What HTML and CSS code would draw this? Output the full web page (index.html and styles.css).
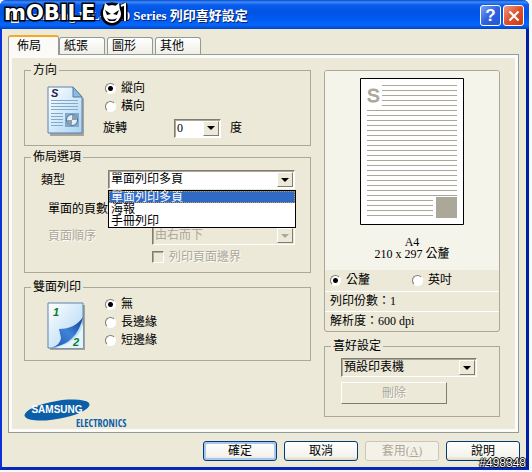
FILE: index.html
```html
<!DOCTYPE html>
<html lang="zh-Hant">
<head>
<meta charset="utf-8">
<title>列印喜好設定</title>
<link rel="stylesheet" href="styles.css">
</head>
<body>
<main class="window">
  <header class="titlebar">
    <svg class="app-icon" width="16" height="16" viewBox="0 0 16 16" aria-hidden="true"><path d="M2 7h12v6H2z" fill="#c9ccd2" stroke="#555"/><path d="M4 2h8v5H4z" fill="#fff"/><path d="M4 12h8v3H4z" fill="#eee"/></svg>
    <h1>Samsung ML-1510 Series 列印喜好設定</h1>
    <button class="caption-btn help" type="button" aria-label="Help">?</button>
    <button class="caption-btn close" type="button" aria-label="Close"><svg width="12" height="12" viewBox="0 0 12 12"><path d="M1.5 1.5l9 9M10.500 1.500l-9 9" stroke="#fff" stroke-width="2.200"/></svg></button>
    <svg class="brand" width="130" height="28" viewBox="0 0 130 28">
      <text class="brand-text" x="2" y="20">mOBILE</text>
      <g stroke="#000" stroke-width="5" stroke-linejoin="round" fill="none"><path d="M119 7l4-2v16"/><circle cx="110" cy="14" r="9"/><path d="M103 4l2 5M117 4l-2 5"/></g>
      <path d="M119 6l4-2v17" stroke="#fff" stroke-width="2" fill="none"/>
      <path d="M103 3l5 4h4l5-4 1 8-2 9-6 3-6-3-3-8z" fill="#fff"/>
      <circle cx="110" cy="14" r="9" fill="#fff"/>
      <path d="M103 10l6 4-4 1zM117 10l-6 4 4 1zM105 18q5 3 10 0l-2 3h-6z" fill="#000"/>
    </svg>
  </header>

  <div class="content">
    <nav class="tabs" role="tablist">
      <button class="tab active" type="button" role="tab" aria-selected="true">佈局</button>
      <button class="tab" type="button" role="tab">紙張</button>
      <button class="tab" type="button" role="tab">圖形</button>
      <button class="tab" type="button" role="tab">其他</button>
    </nav>

    <section class="panel">
      <div class="left">
        <fieldset class="group orientation">
          <legend>方向</legend>
          <svg class="page-icon" width="40" height="52" viewBox="0 0 40 52" aria-hidden="true">
            <defs><linearGradient id="sheet" x1="0" y1="0" x2="1" y2="1"><stop offset="0" stop-color="#fff"/><stop offset="1" stop-color="#a9d4f3"/></linearGradient></defs>
            <path d="M3 4h25l9 10v37H3z" fill="#777" opacity=".6"/>
            <path d="M1 2h25l9 10v36H1z" fill="url(#sheet)" stroke="#5d83ae"/>
            <path d="M26 2v10h9z" fill="#8dbbe2" stroke="#4f7dac"/>
            <path d="M4 15.500h27M4 18.500h27M4 21.500h27M4 24.500h27M4 28.500h12M4 31.500h12M4 34.500h12M4 37.500h12M4 40.500h12" stroke="#7fa9cf"/>
            <path d="M18 28h14v14H18z" fill="#7fa8d0"/><circle cx="25" cy="35" r="5.500" fill="#e5edf5" stroke="#56718f"/><path d="M25 30v5h5a5 5 0 0 0-5-5M25 40v-5h-5a5 5 0 0 0 5 5" fill="#8b9bb0"/>
            <text class="icon-s" x="4" y="12">S</text>
          </svg>
          <div class="options">
            <label class="radio"><input type="radio" name="orient" checked>縱向</label>
            <label class="radio"><input type="radio" name="orient">橫向</label>
            <div class="rotate">
              <label for="rotate">旋轉</label>
              <span class="combo small"><select id="rotate"><option>0</option></select><i class="arrow"></i></span>
              <span>度</span>
            </div>
          </div>
        </fieldset>

        <fieldset class="group layout">
          <legend>佈局選項</legend>
          <div class="row main">
            <label for="type">類型</label>
            <span class="combo"><select id="type"><option>單面列印多頁</option></select><i class="arrow"></i>
              <ul class="dropdown" role="listbox">
                <li class="selected" role="option" aria-selected="true">單面列印多頁</li>
                <li role="option">海報</li>
                <li role="option">手冊列印</li>
              </ul>
            </span>
          </div>
          <div class="row sub pages"><span>單面的頁數</span></div>
          <div class="row sub order disabled">
            <label for="order">頁面順序</label>
            <span class="combo"><select id="order" disabled><option>由右而下</option></select><i class="arrow"></i></span>
          </div>
          <div class="row sub border disabled">
            <span></span>
            <label class="check"><input type="checkbox" disabled>列印頁面邊界</label>
          </div>
        </fieldset>

        <fieldset class="group duplex">
          <legend>雙面列印</legend>
          <svg class="page-icon" width="40" height="50" viewBox="0 0 40 50" aria-hidden="true">
            <defs><linearGradient id="curl" x1="0" y1="1" x2="1" y2="0"><stop offset="0" stop-color="#1d55b5"/><stop offset=".5" stop-color="#3f83d8"/><stop offset="1" stop-color="#0c3f93"/></linearGradient></defs>
            <path d="M3 4h35v45H3z" fill="#777" opacity=".6"/>
            <path d="M1 2h35v45H1z" fill="url(#sheet)" stroke="#5d83ae"/>
            <path d="M36 16q-8 12-24 12l2 9q-1 7-9 9.500Q30 43 36 16z" fill="url(#curl)"/>
            <path d="M36 22q-4 19-28 25h28z" fill="#e4f4fd"/>
            <text class="icon-n" x="6" y="15">1</text><text class="icon-n" x="26" y="45">2</text>
          </svg>
          <div class="options">
            <label class="radio"><input type="radio" name="duplex" checked>無</label>
            <label class="radio"><input type="radio" name="duplex">長邊緣</label>
            <label class="radio"><input type="radio" name="duplex">短邊緣</label>
          </div>
        </fieldset>

        <svg class="logo" width="110" height="32" viewBox="0 0 110 32" role="img" aria-label="Samsung Electronics">
          <ellipse cx="32" cy="12" rx="33" ry="9" fill="#0b5ea8" transform="rotate(-10 32 12)"/>
          <text class="logo-name" x="32" y="15" text-anchor="middle">SAMSUNG</text>
          <text class="logo-sub" x="51" y="29">ELECTRONICS</text>
        </svg>
      </div>

      <div class="right">
        <div class="card">
          <div class="preview">
            <svg width="104" height="147" viewBox="0 0 104 147" aria-hidden="true">
              <path d="M.5.5h103v146H.5z" fill="#fff" stroke="#000"/>
              <path d="M22 7.500h75M22 12.500h75M22 17.500h75M22 22.500h75M22 27.500h75M7 32.500h90M7 37.500h90M7 42.500h90M7 47.500h90M7 52.500h90M7 57.500h90M7 62.500h90M7 67.500h90M7 72.500h90M7 77.500h90M7 82.500h90M7 87.500h90M7 92.500h90M7 97.500h90M7 102.500h90M7 107.500h90M7 112.500h90M7 117.500h90M7 122.500h66M7 127.500h66M7 132.500h66M7 137.500h66" stroke="#aca899"/>
              <path d="M76 119h21v21H76z" fill="#aca899"/>
              <text class="paper-s" x="7" y="24">S</text>
            </svg>
            <p>A4<br>210 x 297 公釐</p>
          </div>
          <div class="line units">
            <label class="radio"><input type="radio" name="unit" checked>公釐</label>
            <label class="radio"><input type="radio" name="unit">英吋</label>
          </div>
          <div class="line">列印份數：1</div>
          <div class="line">解析度：600 dpi</div>
        </div>
        <fieldset class="group favorites">
          <legend>喜好設定</legend>
          <span class="combo"><select aria-label="喜好設定"><option>預設印表機</option></select><i class="arrow"></i></span>
          <button class="delete" type="button" disabled>刪除</button>
        </fieldset>
      </div>
    </section>

    <footer class="actions">
      <button class="btn default" type="button">確定</button>
      <button class="btn" type="button">取消</button>
      <button class="btn" type="button" disabled>套用(<u>A</u>)</button>
      <button class="btn" type="button">說明</button>
    </footer>
  </div>
  <span class="stamp">#498348</span>
</main>
</body>
</html>
```
FILE: styles.css
```css
* { box-sizing: border-box; }
body {
  margin: 0;
  background: #f4faff;
  font: 12px/14px "Liberation Serif", "Noto Sans CJK TC", serif;
  color: #000;
}
button, select, input { font: inherit; color: inherit; margin: 0; }
.window {
  position: relative;
  margin-right: 3px;
  background: #ece9d8;
  border: solid #0831d9;
  border-width: 0 3px 3px 2px;
  border-right-color: #001ea0;
  border-bottom-color: #0828b8;
  border-radius: 6px 6px 0 0;
}
.titlebar {
  display: flex;
  align-items: center;
  gap: 2px;
  height: 29px;
  margin: 0 -3px 0 -2px;
  padding: 2px 5px 0 7px;
  border-radius: 6px 6px 0 0;
  background: linear-gradient(#0a49c8 0, #3c8cf8 2px, #0a5cec 5px, #0054e3 12px, #0058ee 18px, #0566fb 25px, #0144c4 29px);
}
.titlebar h1 {
  flex: 1;
  margin: 0;
  font-size: 13px;
  line-height: 16px;
  color: #fff;
  text-shadow: 1px 1px #0a246a;
  white-space: nowrap;
}
.caption-btn {
  display: grid;
  place-items: center;
  width: 21px;
  height: 21px;
  padding: 0;
  border: 1px solid #fff;
  border-radius: 3px;
  color: #fff;
  font: bold 17px/17px "Liberation Sans", sans-serif;
}
.help { background: linear-gradient(135deg, #7da2f4, #2f62dc 50%, #2457d6); }
.close { background: linear-gradient(135deg, #f09a82, #e0502c 50%, #c63b12); }
.brand { position: absolute; left: 0; top: 0; }
.brand-text {
  font: bold 21px "DejaVu Sans", sans-serif;
  fill: #fff;
  stroke: #000;
  stroke-width: 3px;
  paint-order: stroke;
}
.content { padding: 6px 7px 6px 6px; }
.tabs { display: flex; align-items: flex-end; gap: 2px; }
.tab {
  width: 46px;
  height: 17px;
  padding: 0;
  border: 1px solid #919b9c;
  border-bottom: 0;
  border-radius: 3px 3px 0 0;
  background: linear-gradient(#fff, #f0efe6);
  line-height: 16px;
}
.tab.active {
  width: 51px;
  height: 20px;
  margin: 0 -2px -1px 0;
  padding: 0 8px;
  border-top: 2px solid #f5a929;
  background: #fbfaf6;
  text-align: left;
  z-index: 1;
}
.tab:not(.active) { padding-left: 4px; text-align: left; }
.panel {
  display: grid;
  grid-template-columns: 287fr 176fr;
  gap: 13px;
  padding: 8px 18px 2px 15px;
  border: 1px solid #919b9c;
  outline: 3px solid #fcfbf8;
  outline-offset: -4px;
}
.left { min-width: 0; }
.group {
  margin: 0;
  min-width: 0;
  padding-left: 6px;
  border: 1px solid #aca899;
}
legend { height: 14px; padding: 0 2px; }
.orientation, .duplex { display: flex; gap: 18px; }
.orientation { padding: 2px 15px 7px 6px; }
.layout { margin-top: 4px; padding: 6px 15px 8px 6px; }
.duplex { margin-top: 7px; padding: 1px 15px 9px 6px; }
.page-icon { flex: none; margin: 6px -2px 0 16px; }
.orientation .options, .duplex .options { flex: 1; }
.radio { display: flex; align-items: center; gap: 5px; height: 18px; }
.options .radio { padding-left: 2px; }
input[type="radio"] {
  appearance: none;
  width: 11px;
  height: 11px;
  border: 1px solid;
  border-color: #807d70 #fff #fff #807d70;
  border-radius: 50%;
  background: #fff;
}
input[type="radio"]:checked { background: radial-gradient(circle, #000 2px, #fff 3px); }
input[type="checkbox"] {
  appearance: none;
  width: 12px;
  height: 12px;
  border: 1px solid;
  border-color: #807d70 #fff #fff #807d70;
  box-shadow: inset 1px 1px #aca899;
}
.rotate { display: flex; align-items: center; gap: 9px; margin-top: 3px; height: 20px; }
.rotate label { width: 62px; }
.combo {
  position: relative;
  display: flex;
  flex: 1;
  height: 19px;
  padding: 1px;
  border: 1px solid;
  border-color: #807d70 #fff #fff #807d70;
  box-shadow: inset 1px 1px #aca899;
  background: #fff;
}
.combo.small { flex: none; width: 47px; }
.combo select {
  appearance: none;
  flex: 1;
  min-width: 0;
  padding: 0 1px;
  border: 0;
  border-radius: 0;
  background: none;
  line-height: 15px;
}
.arrow {
  display: grid;
  place-items: center;
  width: 16px;
  border: 1px solid;
  border-color: #fff #807d70 #807d70 #fff;
  background: #ece9d8;
}
.arrow::after {
  content: "";
  border: 4px solid transparent;
  border-top-color: #000;
  border-bottom: 0;
}
.row { display: flex; align-items: center; padding-left: 10px; }
.main { height: 19px; }
.main label { width: 67px; }
.sub { padding-left: 17px; }
.pages { margin-top: 10px; height: 20px; }
.order { margin-top: 7px; }
.border { margin-top: 5px; }
.order > label, .border > span { width: 104px; }
.disabled { color: #aca899; text-shadow: 1px 1px #fff; }
.disabled select { color: #aca899; opacity: 1; }
.disabled .combo { background: #ece9d8; }
.disabled .arrow::after { border-top-color: #aca899; }
.check { display: flex; align-items: center; gap: 5px; }
.dropdown {
  position: absolute;
  z-index: 2;
  top: 19px;
  left: -1px;
  right: -2px;
  margin: 0;
  padding: 0;
  list-style: none;
  border: 1px solid #000;
  background: #fff;
  line-height: 12px;
}
.dropdown li { height: 12px; padding: 0 2px; }
.dropdown .selected { background: #316ac5; color: #fff; outline: 1px dotted #b59a62; outline-offset: -1px; }
.logo { display: block; overflow: visible; margin-top: 37px; margin-left: 1px; }
.icon-s { font: italic bold 11px "Liberation Sans", sans-serif; fill: #1b2552; }
.icon-n { font: italic bold 11px "Liberation Sans", sans-serif; fill: #0b7a2c; }
.logo-name { font: bold 10px "Liberation Sans", sans-serif; fill: #fff; }
.logo-sub { font: bold 10px "Liberation Sans Narrow", "Open Sans Condensed", "Liberation Sans", sans-serif; fill: #0b5ea8; }
.paper-s { font: 19px "Liberation Sans", sans-serif; fill: #aca899; stroke: #aca899; }
.right { padding-top: 7px; min-width: 0; }
.card { border: 1px solid #aca899; border-radius: 3px; overflow: hidden; }
.preview { padding: 7px 0 10px; background: #f5f4ea; text-align: center; }
.preview svg { display: block; margin: 0 auto; }
.preview p { margin: 11px 0 0; line-height: 12px; }
.line { height: 20px; padding: 0 5px; line-height: 19px; }
.line + .line { border-top: 1px solid #fff; }
.units { display: grid; grid-template-columns: 1fr 1fr; align-items: center; height: 21px; }
.favorites { margin-top: 7px; padding: 5px 22px 12px 6px; }
.favorites .combo { margin-left: 10px; background: #ece9d8; }
.delete {
  display: block;
  width: 106px;
  height: 22px;
  margin: 5px 0 0 10px;
  padding: 0;
  border: 1px solid;
  border-color: #fff #807d70 #807d70 #fff;
  background: #ece9d8;
  color: #aca899;
  text-shadow: 1px 1px #fff;
}
.actions { display: flex; justify-content: flex-end; gap: 7px; margin-top: 8px; margin-right: -1px; }
.btn {
  width: 74px;
  height: 20px;
  padding: 0;
  border: 1px solid #003c74;
  border-radius: 3px;
  background: linear-gradient(#fff, #f3f2eb 80%, #dcd8cb);
  line-height: 16px;
}
.btn.default { box-shadow: inset 0 0 0 2px #a9c5f1; }
.btn:disabled { border-color: #c9c7ba; background: #f4f2e8; color: #aca899; }
.stamp {
  position: absolute;
  right: 0;
  bottom: -3px;
  font: 12px/14px "Liberation Sans", sans-serif;
  color: #fff;
  text-shadow: 1px 0 #000, -1px 0 #000, 0 1px #000, 0 -1px #000;
}
```
